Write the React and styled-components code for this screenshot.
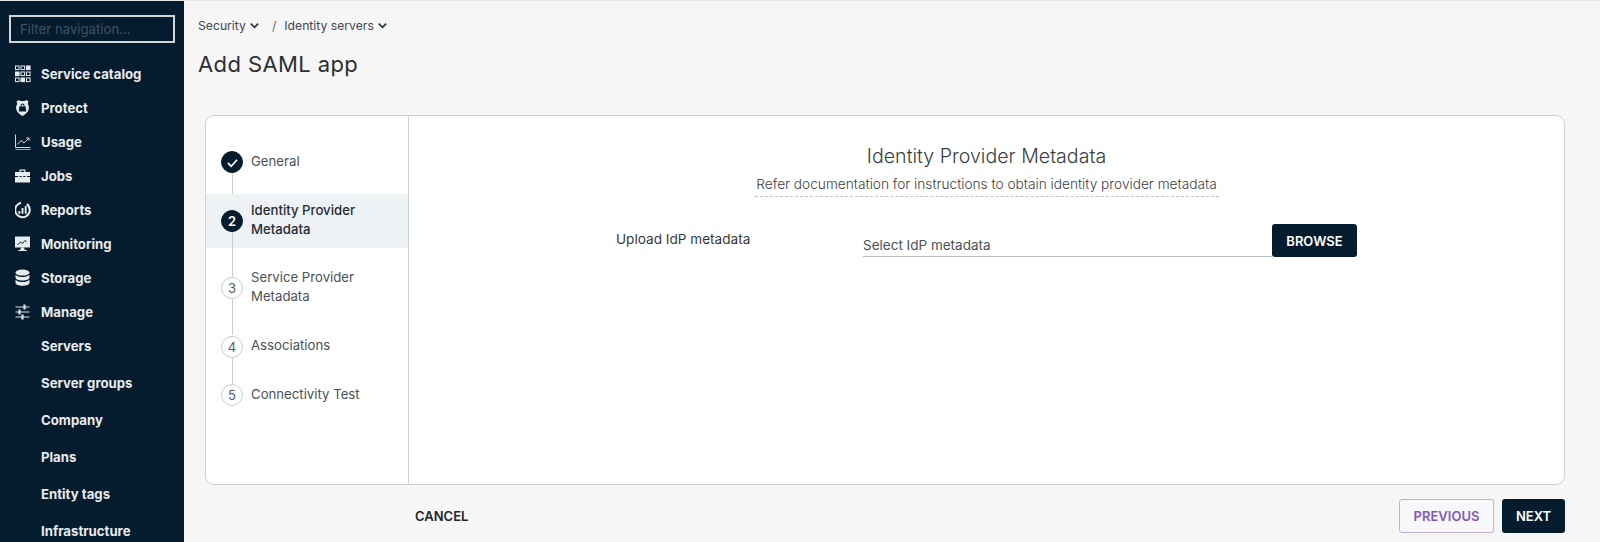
import React from "react";
import styled, { createGlobalStyle } from "styled-components";

const Global = createGlobalStyle`
  html, body { margin: 0; padding: 0; height: 542px; overflow: hidden; background: #f6f6f6; }
  #root { height: 542px; }
  * { box-sizing: border-box; }
  body { font-family: "Inter", "Liberation Sans", sans-serif; }
`;

const Page = styled.div`
  display: flex;
  height: 542px;
  overflow: hidden;
  border-top: 1px solid #e6e6e6;
`;
const Sidebar = styled.aside`
  width: 184px;
  flex: none;
  height: 541px;
  overflow: hidden;
  background: #051c2e;
  padding: 14px 0 0 9px;
`;
const Filter = styled.div`
  width: 166px;
  height: 28px;
  border: 2px solid #d3d6d9;
  color: #3f5263;
  font-size: 13.2px;
  line-height: 24px;
  padding-left: 9px;
  margin-bottom: 14px;
  white-space: nowrap;
`;
const NavList = styled.nav`
  display: flex;
  flex-direction: column;
`;
const NavRow = styled.div`
  display: flex;
  align-items: center;
  height: 34px;
  padding-left: 6px;
  gap: 8px;
  color: #e8ebee;
  font-size: 13.2px;
  font-weight: 700;
  white-space: nowrap;
`;
const SubList = styled.div`
  display: flex;
  flex-direction: column;
  margin-top: -2px;
  ${NavRow} {
    height: 37px;
  }
`;
const IconSlot = styled.span`
  width: 18px;
  height: 18px;
  flex: none;
  display: flex;
`;
const Main = styled.main`
  flex: 1;
  min-width: 0;
  padding: 16px 35px 0 14px;
  display: flex;
  flex-direction: column;
`;
const Crumbs = styled.div`
  display: flex;
  align-items: center;
  height: 16px;
  font-size: 12.2px;
  color: #3f4750;
`;
const Crumb = styled.span`
  display: inline-flex;
  align-items: center;
  gap: 3px;
`;
const Slash = styled.span`
  margin: 0 8px 0 12px;
  color: #5c6670;
`;
const Title = styled.h1`
  margin: 16px 0 0;
  height: 30px;
  font-size: 22px;
  line-height: 30px;
  font-weight: 400;
  letter-spacing: 0.4px;
  color: #2b2f33;
`;
const Card = styled.section`
  margin: 36px 0 0 7px;
  height: 370px;
  display: flex;
  background: #fff;
  border: 1px solid #cfd2d4;
  border-radius: 9px;
  overflow: hidden;
`;
const Steps = styled.div`
  width: 203px;
  flex: none;
  border-right: 1px solid #cfd2d4;
  padding-top: 14px;
  display: flex;
  flex-direction: column;
`;
const Step = styled.div`
  position: relative;
  display: flex;
  align-items: center;
  height: ${p => p.$h}px;
  padding-left: 15px;
  gap: 8px;
  background: ${p => (p.$active ? "#eff2f4" : "transparent")};
  &::after {
    content: ${p => (p.$last ? "none" : '""')};
    position: absolute;
    left: 26px;
    top: calc(50% + 11px);
    height: ${p => p.$line}px;
    width: 1px;
    background: #c9cdd0;
  }
`;
const Dot = styled.span`
  width: 22px;
  height: 22px;
  flex: none;
  border-radius: 50%;
  display: flex;
  align-items: center;
  justify-content: center;
  font-size: 13px;
  background: ${p => (p.$on ? "#051c2e" : "#fff")};
  color: ${p => (p.$on ? "#fff" : "#555c63")};
  border: 1px solid ${p => (p.$on ? "#051c2e" : "#c9cdd0")};
  font-weight: ${p => (p.$on ? 600 : 400)};
`;
const StepLabel = styled.span`
  font-size: 13.2px;
  line-height: 19px;
  color: ${p => (p.$active ? "#262c32" : "#4b5158")};
  font-weight: ${p => (p.$active ? 500 : 400)};
  margin-top: ${p => p.$up}px;
  width: 125px;
`;
const Panel = styled.div`
  flex: 1;
  min-width: 0;
  padding-top: 29px;
  display: flex;
  flex-direction: column;
`;
const Head = styled.div`
  width: 1155px;
  display: flex;
  flex-direction: column;
  align-items: center;
`;
const Heading = styled.h2`
  margin: 0;
  font-size: 19.6px;
  line-height: 22px;
  font-weight: 300;
  white-space: nowrap;
  color: #3a3f44;
`;
const Hint = styled.div`
  margin-top: 9px;
  font-size: 13.7px;
  line-height: 16px;
  padding: 0 0 4px;
  width: 464px;
  text-align: center;
  white-space: nowrap;
  font-weight: 300;
  color: #3d4247;
  border-bottom: 1px dashed #bfc3c6;
`;
const UploadRow = styled.div`
  margin-top: 27px;
  padding-left: 207px;
  display: flex;
  align-items: flex-start;
`;
const UploadLabel = styled.label`
  width: 247px;
  flex: none;
  padding-top: 7px;
  font-size: 13.6px;
  line-height: 16px;
  color: #33383d;
`;
const FileField = styled.div`
  width: 409px;
  height: 33px;
  border-bottom: 1px solid #bcc0c3;
  padding-top: 13px;
  font-size: 13.5px;
  line-height: 16px;
  color: #4b5056;
`;
const DarkButton = styled.button`
  width: ${p => p.$w}px;
  height: ${p => p.$hh}px;
  border: none;
  border-radius: 3px;
  background: #051c2e;
  color: #fff;
  font: 600 13px "Inter", sans-serif;
  padding: 0;
`;
const Footer = styled.footer`
  margin-top: 14px;
  display: flex;
  align-items: center;
  padding-left: 217px;
`;
const Cancel = styled.span`
  font-size: 13px;
  font-weight: 600;
  color: #1e2429;
  margin-right: auto;
`;
const Previous = styled.button`
  width: 95px;
  height: 34px;
  margin-right: 8px;
  border: 1px solid #bdb3cf;
  border-radius: 3px;
  background: #f8f7fa;
  color: #8259b8;
  font: 600 13px "Inter", sans-serif;
  padding: 0;
`;

const Chevron = () => (
  <svg width="11" height="11" viewBox="0 0 12 12" fill="none" stroke="#2d343a" strokeWidth="1.8">
    <path d="M2 4l4 4 4-4" />
  </svg>
);

const S = { width: 18, height: 18, viewBox: "1.5 0 18 18" };
const filled = ["13-1", "2-7", "7.5-13"];
const icons = {
  catalog: (
    <svg {...S} fill="none" stroke="#e8ebee" strokeWidth="1">
      {[1, 7, 13].map(y =>
        [2, 7.5, 13].map(x => (
          <rect key={`${x}-${y}`} x={x} y={y} width="3.6" height="3.6" fill={filled.includes(`${x}-${y}`) ? "#e8ebee" : "none"} />
        ))
      )}
    </svg>
  ),
  protect: (
    <svg {...S}>
      <path fill="#e8ebee" d="M3 2.500L5 1l2 1h4l2-1 2 1.500-.8 2.500c1.600 1.800 1.300 3.800.8 6-.7 2.700-3.200 4.200-6 6-2.800-1.800-5.300-3.300-6-6-.5-2.200-.8-4.200.8-6z" />
      <path fill="#051c2e" d="M5.800 7.500h1.200V6.500a2 2 0 0 1 4 0v1h1.200l.5 5H5.300zM8 7.500h2v-1a1 1 0 0 0-2 0z" fillRule="evenodd" />
    </svg>
  ),
  usage: (
    <svg {...S} fill="none" stroke="#d5d9dd" strokeWidth="1">
      <path d="M2 1.500V14.500H17" />
      <path d="M2 16.500H17" opacity="0.700" />
      <path d="M3.800 11.500L7.500 7.500l3 2.500 5-5M12.800 5h2.800v2.700" />
    </svg>
  ),
  jobs: (
    <svg {...S}>
      <path fill="#e8ebee" d="M6 2.500h6v2.500h-1.200v-1.300H7.200V5H6z" />
      <path fill="#e8ebee" d="M1.500 5h15v4h-15zM1.500 10h15v5.500h-15z" />
      <path fill="#e8ebee" d="M4.500 8h1.500v3H4.500zM8.250 8h1.500v3h-1.500zM12 8h1.500v3H12z" />
    </svg>
  ),
  reports: (
    <svg {...S} fill="none" stroke="#e8ebee">
      <path strokeWidth="2" d="M7.500 1.800A7.300 7.300 0 1 0 16.300 9a7.300 7.300 0 0 0-3-5.900" />
      <path strokeWidth="1.900" d="M5.800 12.800v-2.800M9 12.800V7M12.200 12.800V5" />
    </svg>
  ),
  monitor: (
    <svg {...S}>
      <rect x="1.500" y="1.500" width="15" height="11" fill="#e8ebee" />
      <path d="M4 10l3-3 2 1.500 2.500-3 1.500 1" fill="none" stroke="#051c2e" strokeWidth="1" />
      <path d="M7.500 12.500h3l.8 2.500h2v1H4.700v-1h2z" fill="#e8ebee" />
    </svg>
  ),
  storage: (
    <svg {...S} fill="#e8ebee">
      <ellipse cx="9" cy="3.600" rx="7" ry="3" />
      <path d="M2 5.800c1.500 1.700 4.300 2.300 7 2.300s5.500-.6 7-2.300V8.500c0 1.700-3.100 3-7 3s-7-1.300-7-3z" />
      <path d="M2 10.800c1.500 1.700 4.300 2.300 7 2.300s5.500-.6 7-2.300v3c0 1.700-3.100 3-7 3s-7-1.300-7-3z" />
    </svg>
  ),
  manage: (
    <svg {...S} fill="none" stroke="#dfe3e6" strokeWidth="1">
      <path d="M2 4h14M2 9h14M2 14h14" />
      <path strokeWidth="2.200" d="M11 1.500v5M6 6.500v5M9 11.500v5" />
    </svg>
  ),
};

const main = [
  ["catalog", "Service catalog"],
  ["protect", "Protect"],
  ["usage", "Usage"],
  ["jobs", "Jobs"],
  ["reports", "Reports"],
  ["monitor", "Monitoring"],
  ["storage", "Storage"],
  ["manage", "Manage"],
];
const sub = ["Servers", "Server groups", "Company", "Plans", "Entity tags", "Infrastructure"];

const steps = [
  { n: "check", label: "General", h: 64, line: 21, up: -1, on: true },
  { n: "2", label: <>Identity Provider<br />Metadata</>, h: 54, line: 46, active: true, on: true, up: -3 },
  { n: "3", label: <>Service Provider<br />Metadata</>, h: 80, line: 36, up: -3 },
  { n: "4", label: "Associations", h: 37, line: 26, up: -2 },
  { n: "5", label: "Connectivity Test", h: 60, last: true, up: -2 },
];

export default function App() {
  return (
    <Page>
      <Global />
      <Sidebar>
        <Filter>Filter navigation...</Filter>
        <NavList>
          {main.map(([k, t]) => (
            <NavRow key={k}>
              <IconSlot>{icons[k]}</IconSlot>
              {t}
            </NavRow>
          ))}
          <SubList>
            {sub.map(t => (
              <NavRow key={t}>
                <IconSlot />
                {t}
              </NavRow>
            ))}
          </SubList>
        </NavList>
      </Sidebar>
      <Main>
        <Crumbs>
          <Crumb>Security <Chevron /></Crumb>
          <Slash>/</Slash>
          <Crumb>Identity servers <Chevron /></Crumb>
        </Crumbs>
        <Title>Add SAML app</Title>
        <Card>
          <Steps>
            {steps.map((s, i) => (
              <Step key={i} $h={s.h} $active={s.active} $line={s.line} $last={s.last}>
                <Dot $on={s.on}>
                  {s.n === "check" ? (
                    <svg width="13" height="13" viewBox="0 0 14 14" fill="none" stroke="#fff" strokeWidth="1.800">
                      <path d="M2 7.500l3.500 3.500L12 4" />
                    </svg>
                  ) : (
                    s.n
                  )}
                </Dot>
                <StepLabel $active={s.active} $up={s.up}>{s.label}</StepLabel>
              </Step>
            ))}
          </Steps>
          <Panel>
            <Head>
              <Heading>Identity Provider Metadata</Heading>
              <Hint>Refer documentation for instructions to obtain identity provider metadata</Hint>
            </Head>
            <UploadRow>
              <UploadLabel>Upload IdP metadata</UploadLabel>
              <FileField>Select IdP metadata</FileField>
              <DarkButton $w={85} $hh={33}>BROWSE</DarkButton>
            </UploadRow>
          </Panel>
        </Card>
        <Footer>
          <Cancel>CANCEL</Cancel>
          <Previous>PREVIOUS</Previous>
          <DarkButton $w={63} $hh={34}>NEXT</DarkButton>
        </Footer>
      </Main>
    </Page>
  );
}
